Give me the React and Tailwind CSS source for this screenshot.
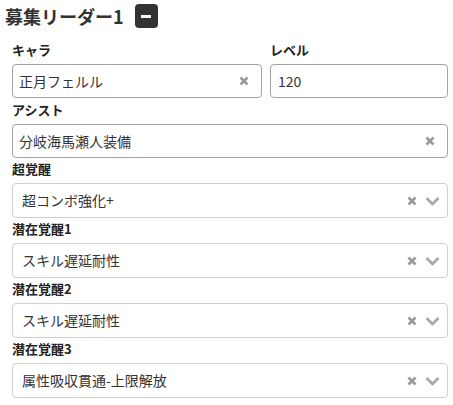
import React from "react";

const XIcon = ({ className = "" }) => (
	<svg width="10" height="10" viewBox="0 0 10 10" className={className}>
		<path d="M1.5 1.5 L8.5 8.5 M8.5 1.5 L1.5 8.5" stroke="#999" strokeWidth="2.6" strokeLinecap="butt" />
	</svg>
);

const Chevron = () => (
	<svg width="15" height="10" viewBox="0 0 15 10">
		<path d="M1.5 2 L7.5 8 L13.5 2" stroke="#aaa" strokeWidth="2.8" fill="none" />
	</svg>
);

const Label = ({ children }) => (
	<div className="pt-[1px] mb-[4px] leading-[20px] text-[13px] font-bold text-[#222]">{children}</div>
);

const TextBox = ({ value, clear }) => (
	<div className="h-[34px] border border-[#a3a3a3] rounded-[4px] flex items-center pl-[6px] pr-[12px] text-[14px] text-[#333] bg-white">
		<span className="flex-1">{value}</span>
		{clear && <XIcon />}
	</div>
);

const SelectBox = ({ value }) => (
	<div className="h-[35px] border border-[#cfcfcf] rounded-[4px] flex items-center pl-[9px] pr-[7px] text-[14px] text-[#333] bg-white">
		<span className="flex-1">{value}</span>
		<XIcon className="mr-[8px]" />
		<Chevron />
	</div>
);

const App = () => {
	const selects = [
		["超覚醒", "超コンボ強化+"],
		["潜在覚醒1", "スキル遅延耐性"],
		["潜在覚醒2", "スキル遅延耐性"],
		["潜在覚醒3", "属性吸収貫通-上限解放"],
	];

	return (
		<div className="w-[453px] h-[405px] bg-white font-['Noto_Sans_CJK_JP',sans-serif] text-[#333]">
			<div className="h-[39px] pl-[5px] pt-[4px] flex items-start gap-[11px]">
				<h1 className="text-[18px] font-bold leading-[24px] text-[#333]">募集リーダー1</h1>
				<button className="w-[23px] h-[24px] rounded-[4px] bg-[#333] flex items-center justify-center">
					<span className="block w-[10px] h-[3px] bg-white"></span>
				</button>
			</div>

			<div className="pl-[12px] pr-[5px]">
				<div className="grid grid-cols-[250px_1fr] gap-[8px]">
					<div>
						<Label>キャラ</Label>
						<TextBox value="正月フェルル" clear />
					</div>
					<div>
						<Label>レベル</Label>
						<div className="h-[34px] border border-[#a3a3a3] rounded-[4px] flex items-center pl-[7px] text-[14px] text-[#333]">
							120
						</div>
					</div>
				</div>

				<div className="mt-[1px]">
					<Label>アシスト</Label>
					<TextBox value="分岐海馬瀬人装備" clear />
				</div>

				{selects.map(([label, value]) => (
					<div key={label}>
						<Label>{label}</Label>
						<SelectBox value={value} />
					</div>
				))}
			</div>
		</div>
	);
};

export default App;
